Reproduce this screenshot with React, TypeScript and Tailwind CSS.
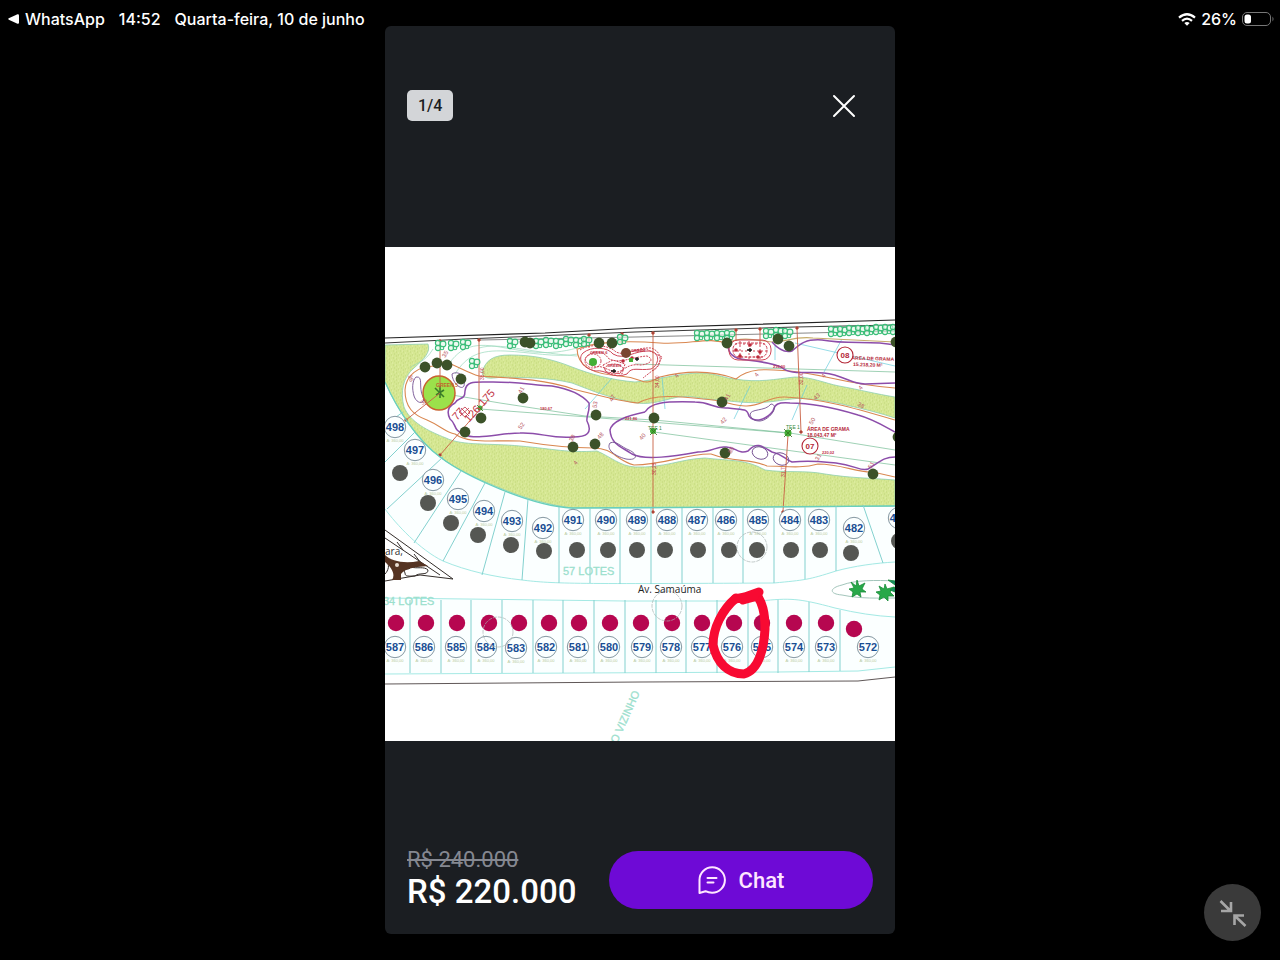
import React from "react";

type Lot = [label: string, x: number, y: number];
type Point = [x: number, y: number];

const upperLots: Lot[] = [
  ["498", 395, 427], ["497", 415, 450], ["496", 433, 480], ["495", 458, 499],
  ["494", 484, 511], ["493", 512, 521], ["492", 543, 528], ["491", 573, 520],
  ["490", 606, 520], ["489", 637, 520], ["488", 667, 520], ["487", 697, 520],
  ["486", 726, 520], ["485", 758, 520], ["484", 790, 520], ["483", 819, 520],
  ["482", 854, 528], ["481", 899, 518],
];

const lowerLots: Lot[] = [
  ["587", 395, 647], ["586", 424, 647], ["585", 456, 647], ["584", 486, 647],
  ["583", 516, 648], ["582", 546, 647], ["581", 578, 647], ["580", 609, 647],
  ["579", 642, 647], ["578", 671, 647], ["577", 702, 647], ["576", 732, 647],
  ["575", 762, 647], ["574", 794, 647], ["573", 826, 647], ["572", 868, 647],
];

const grayDots: Point[] = [
  [400, 473], [428, 503], [451, 523], [478, 535], [511, 545], [544, 551],
  [577, 550], [608, 550], [637, 550], [665, 550], [698, 550], [729, 550],
  [757, 550], [791, 550], [820, 550], [851, 553], [899, 541],
];

const crimsonDots: Point[] = [
  [396, 623], [426, 623], [457, 623], [489, 623], [519, 623], [549, 623],
  [579, 623], [610, 623], [641, 623], [672, 623], [702, 623], [734, 623],
  [762, 623], [794, 623], [826, 623], [854, 629],
];

const upperDividers = [
  "M415 432 385 462", "M443 457 387 509", "M461 471 414 543", "M485 483 443 561",
  "M505 492 482 575", "M528 499 522 580", "M559 507V583", "M590 508V583",
  "M620 508V584", "M651 508V584", "M682 508V584", "M713 508V583", "M743 508V583",
  "M774 508V583", "M805 507V579", "M836 506V571", "M863 505 883 563", "M403 412 385 425",
];

const lowerDividers = [410, 441, 471, 502, 533, 563, 594, 625, 656, 686, 717, 748, 778];

const oaks: Point[] = [
  [425, 367], [437, 363], [447, 365], [461, 379], [523, 398], [481, 418],
  [465, 432], [596, 415], [573, 447], [595, 444], [525, 342], [530, 343],
  [599, 343], [612, 343], [727, 343], [778, 339], [789, 346], [722, 402],
  [654, 418], [725, 453], [896, 342], [873, 474], [898, 437],
];

const shrubs: Point[] = [
  [440, 345], [453, 345], [465, 344], [474, 363], [512, 343], [538, 343],
  [548, 342], [558, 343], [568, 341], [578, 342], [586, 341], [622, 339],
  [699, 335], [709, 335], [719, 335], [729, 335], [768, 333], [778, 332],
  [787, 333], [833, 331], [842, 331], [851, 330], [860, 330], [869, 330],
  [878, 329], [887, 329], [895, 329],
];

const tinyMarks: [string, number, number, number][] = [
  ["36", 409, 379, 70], ["35", 425, 403, -40], ["35", 447, 355, -60], ["41", 523, 391, -60],
  ["52", 523, 427, -55], ["47", 614, 399, -60], ["53", 597, 405, -80], ["38", 574, 439, -60],
  ["48", 602, 437, -50], ["40", 644, 438, -50], ["42", 725, 422, -50], ["41", 729, 398, -60],
  ["43", 818, 398, -40], ["38", 860, 407, 30], ["31", 820, 458, -60], ["50", 814, 422, -60],
  ["85", 733, 451, -60], ["51", 873, 466, -60], ["4", 678, 377, -50], ["4", 758, 376, -50],
  ["4", 825, 377, -50], ["4", 862, 389, -50], ["4", 577, 464, -50],
];

function Shrub({ x, y }: { x: number; y: number }) {
  return (
    <g>
      <circle cx={x - 2} cy={y - 2} r={2.6} />
      <circle cx={x + 3} cy={y - 1} r={2.9} />
      <circle cx={x - 2} cy={y + 3} r={2.6} />
      <circle cx={x + 2} cy={y + 3} r={1.8} />
    </g>
  );
}

function LotTag({ lot: [label, x, y] }: { lot: Lot }) {
  return (
    <g>
      <circle cx={x} cy={y} r={10.7} fill="#fbffff" stroke="#647b88" strokeWidth={0.8} />
      <text x={x} y={y + 4} textAnchor="middle" fontSize={11} fontWeight={700} fill="#1a4e93">
        {label}
      </text>
      {x < 890 && (
        <text x={x} y={y + 15} textAnchor="middle" fontSize={4} fill="#b9cba0">
          A: 360,00
        </text>
      )}
    </g>
  );
}

function SitePlan() {
  return (
    <svg
      viewBox="385 247 510 494"
      className="block w-full bg-white font-['Liberation_Sans',sans-serif]"
      role="img"
      aria-label="Planta do loteamento"
    >
      <defs>
        <pattern id="grass" width="7" height="7" patternUnits="userSpaceOnUse">
          <rect width="7" height="7" fill="#d5e792" />
          <path d="M1 1h1M4 2h1M2 4h1M6 5h1M4 6h1" stroke="#c3d77c" strokeWidth="1" />
          <path d="M3 1h1M6 3h1M0 6h1" stroke="#e3efaa" strokeWidth="1" />
        </pattern>
      </defs>

      {/* pale wash under the lots */}
      <path d="M385 385 405 417 440 457 505 490 572 508H895V563L836 571 805 579 774 583H559L522 580 482 575 443 561 414 543 385 509Z" fill="#fbffff" />
      <path d="M385 598 625 601H802L835 608 895 617V672L385 674Z" fill="#fbffff" />

      {/* grass */}
      <g fill="url(#grass)" stroke="#8ecfb0" strokeWidth="0.8">
        <path d="M385 345 428 344C431 352 424 359 414 368C403 377 400 392 404 407C410 422 428 431 446 438C462 446 490 443 520 446C555 449 567 453 597 451C611 457 620 466 635 467C665 468 680 459 705 458C730 461 746 459 765 470C785 473 805 470 825 474C850 478 870 478 895 480V506L800 507 635 508H572C545 504 528 499 505 490C477 479 456 469 440 457C417 440 397 409 385 382Z" />
        <path d="M482 372C486 360 493 355 510 355C534 355 552 359 572 367C590 374 611 380 635 382C658 380 678 373 702 373C718 374 724 378 735 379C759 383 775 379 795 377C812 377 824 383 839 386C861 390 876 394 895 397V418C880 413 864 409 850 406C831 401 818 400 802 398C788 399 779 401 768 402C747 404 733 401 718 400C701 399 691 395 678 397C660 401 649 406 631 402C606 397 588 389 572 383C547 377 525 378 502 377C489 379 483 379 482 372Z" />
      </g>

      {/* site boundary */}
      <g fill="none" stroke="#222" strokeWidth="0.9">
        <path d="M385 338 545 333 635 328 895 320" strokeWidth="1.2" />
        <path d="M385 343 465 339 635 332 795 327 895 325" />
        <path d="M480 340 635 337 895 331" stroke="#555" strokeWidth="0.7" />
        <path d="M385 684 640 682 858 681 895 677" stroke="#4d4444" />
      </g>

      {/* cart paths */}
      <g fill="none" stroke="#98d8ba" strokeWidth="0.7">
        <path d="M445 370C458 348 471 342 500 347S548 356 577 348" />
        <path d="M455 374C467 355 480 350 505 351S556 358 578 354" />
        <path d="M479 348C500 342 525 352 577 356M433 349C425 363 415 363 410 368" />
        <path d="M440 393 500 403 585 416 654 420 790 433 895 450" stroke="#76bd95" />
        <path d="M480 409 588 417 788 433M654 432 895 465M635 364 895 372" stroke="#76bd95" />
        <path d="M612 378 585 409M750 386 734 419M807 385 792 420M842 339 824 372M775 345V360" stroke="#67cddd" />
        <path d="M662 377 665 409M795 343 895 366" stroke="#67cddd" />
      </g>

      {/* orange contours */}
      <g fill="none" stroke="#d98750" strokeWidth="1.1">
        <path d="M435 366C418 366 406 375 405 390C405 407 413 415 427 420C441 426 445 432 455 434C469 444 489 440 520 441C550 446 571 448 594 448C613 448 617 461 634 465C665 465 688 453 711 454C735 463 749 458 767 466C785 466 800 469 818 464C842 464 857 473 873 472L895 477" />
        <path d="M437 362C452 361 462 371 479 376C510 378 545 379 573 389C601 396 622 402 638 403C654 394 680 396 703 399C724 400 735 407 747 406C763 405 771 396 785 397C824 399 854 408 895 420" />
        <path d="M578 349C590 343 620 340 660 343C691 345 708 336 729 344M577 348C577 367 593 374 620 376S640 388 660 377C688 370 712 370 736 379C751 366 773 370 790 371C824 374 844 384 895 388" />
        <path d="M727 343C744 335 763 342 774 342S795 336 813 338L895 342" stroke="#c6ac6a" />
      </g>

      {/* fairways and bunkers */}
      <g fill="none" stroke="#8c4daa" strokeWidth="1.5">
        <path d="M465 391C466 381 475 382 487 382C510 381 533 385 552 386C570 389 583 396 589 403C590 412 586 416 587 421C593 433 587 437 573 437C550 439 541 432 520 433C501 433 477 440 465 435C452 430 457 424 450 419C446 411 449 406 455 403C459 396 465 401 465 391Z" />
        <path d="M645 412C626 416 612 421 610 430C611 444 620 446 632 454C645 461 675 456 698 452C712 452 717 446 725 447C735 446 738 455 748 451C756 442 761 445 772 452C783 454 784 459 792 462C812 460 824 462 836 463C855 465 861 472 868 469C881 461 884 457 895 457" />
        <path d="M645 412C650 403 663 401 695 402C711 402 713 409 728 408C744 410 747 408 749 416C755 424 767 419 773 411C775 404 778 402 790 403C817 403 845 411 858 415C873 419 884 426 895 432" />
        <path d="M728 342C727 354 734 359 747 360C763 362 772 363 781 367C792 376 805 371 824 373C844 375 850 384 865 384L895 383M772 342C779 350 785 353 792 351C801 343 806 339 822 340C849 345 870 340 895 345" />
      </g>
      <g fill="none" stroke="#735091" strokeWidth="0.9">
        <path d="M416 377C424 376 418 387 423 397C426 404 417 405 414 396C412 389 412 381 416 377Z" />
        <path d="M452 374C458 370 466 376 464 386C461 391 452 382 452 374Z" />
        <path d="M610 443C616 440 621 447 629 450C638 454 638 461 626 459C614 456 606 449 610 443Z" />
        <ellipse cx="760" cy="453" rx="8" ry="6" transform="rotate(20 760 453)" />
        <ellipse cx="781" cy="459" rx="8" ry="6" transform="rotate(20 781 459)" />
        <path d="M750 415C750 408 765 412 771 404C780 405 770 420 760 421C754 421 752 419 750 415Z" />
      </g>

      {/* ornate greens */}
      <g fill="none" stroke="#cf4758" strokeWidth="1">
        <path d="M583 353C591 346 608 347 613 354C625 361 634 350 650 351C661 353 659 365 651 369C638 371 632 366 627 374C612 380 606 369 596 371C583 369 577 359 583 353Z" />
        <path d="M587 356C594 350 604 351 608 358C617 365 632 357 647 356C656 360 648 365 640 365C627 363 623 372 617 372C605 370 603 365 595 367C586 364 583 360 587 356Z" strokeDasharray="2 1" />
        <path d="M580 350C590 343 609 345 616 352C628 357 634 347 651 348C664 352 662 367 652 371" strokeDasharray="2 1" />
        <ellipse cx="593" cy="361" rx="8" ry="7" strokeDasharray="2 1" />
        <ellipse cx="614" cy="369" rx="9" ry="5" strokeDasharray="2 1" />
        <path d="M603 365 613 360 625 364 622 374 606 372ZM629 352 646 349 662 357 657 367 643 378" strokeDasharray="2 1" />
        <rect x="729" y="340" width="42" height="20" rx="9" />
        <rect x="733" y="343" width="34" height="14" rx="6" strokeDasharray="3 1" />
        <path d="M735 344H766M733 351H768M737 357H765M740 341V359M749 341V360M760 341V359" strokeDasharray="2 2" />
      </g>
      <g fill="#bb283a">
        {[[736, 350], [740, 356], [750, 345], [760, 352], [758, 357], [623, 361], [632, 358]].map(([x, y]) => (
          <circle key={`${x}-${y}`} cx={x} cy={y} r="1.8" />
        ))}
      </g>
      <path d="M611 371h5m-2-2v4M747 350h5m-2-2v4M635 359h4m-2-2v4" stroke="#111" strokeWidth="1.3" />
      <g fontSize="4" fontWeight="700" fill="#bf3147">
        <text x="590" y="354">GREEN 6</text>
        <text x="607" y="367">GREEN</text>
        <text x="631" y="352">GREEN</text>
        <text x="773" y="368">210,00</text>
        <text x="625" y="420">221,86</text>
        <text x="540" y="410">180,67</text>
        <text x="822" y="454">220,02</text>
      </g>

      {/* tee circle */}
      <ellipse cx="439" cy="393" rx="16" ry="17" fill="#9be14b" stroke="#c8612f" strokeWidth="1.5" />
      <path d="M435 388 444 397M436 395 444 390M440 386V398" stroke="#397b28" strokeWidth="1.6" />
      <text x="436" y="387" fontSize="5" fontWeight="700" fill="#c1652c">GREEN 5</text>

      {/* survey lines */}
      <g stroke="#c86043" strokeWidth="0.9" fill="#8a2530">
        <path d="M440 341V388M479 340V407M653 333V511M797 328 801 432M788 435 783 511M406 420 440 393M440 455 488 400M736 329V341M760 329V341M622 335V345M589 336V348" />
        {[[440, 341], [479, 340], [653, 333], [653, 512], [797, 328], [801, 432], [783, 512], [406, 420], [440, 455], [736, 330], [760, 329], [589, 335], [622, 334]].map(([x, y]) => (
          <circle key={`${x}-${y}`} cx={x} cy={y} r="1.3" />
        ))}
      </g>

      <g fill="#dff7e6" fillOpacity="0.6" stroke="#39bd78" strokeWidth="1.1">
        {shrubs.map(([x, y]) => <Shrub key={`${x}-${y}`} x={x} y={y} />)}
      </g>
      <g fill="#3c5229">
        {oaks.map(([x, y]) => <circle key={`${x}-${y}`} cx={x} cy={y} r="5.4" />)}
      </g>
      <circle cx="626" cy="353" r="5" fill="#79452f" />
      <g fill="#43af36">
        <circle cx="593" cy="362" r="4" />
        <circle cx="788" cy="433" r="3.5" />
        <circle cx="653" cy="431" r="3" />
        <circle cx="480" cy="408" r="2.5" />
        <rect x="629" y="358" width="4" height="4" />
      </g>
      <path d="M784 429 792 437M792 429 784 437M650 428 657 435M657 428 650 435M477 405 483 411" stroke="#386e20" strokeWidth="0.8" />

      <g fontSize="6" fill="#b65361">
        {tinyMarks.map(([t, x, y, a], i) => (
          <text key={i} x={x} y={y} textAnchor="middle" transform={`rotate(${a} ${x} ${y})`}>{t}</text>
        ))}
      </g>
      <g fill="#c23445">
        <text x="457" y="421" fontSize="11" transform="rotate(-48 457 421)">77</text>
        <path d="M459 412 465 407 470 412 465 417ZM461 408 469 416M469 408 460 416" fill="none" stroke="#c23445" strokeWidth="0.8" />
        <text x="469" y="423" fontSize="11" transform="rotate(-48 469 423)">126.175</text>
        <text x="484" y="380" fontSize="5" transform="rotate(-90 484 380)">35,00</text>
        <text x="659" y="388" fontSize="5" transform="rotate(-90 659 388)">34,00</text>
        <text x="656" y="475" fontSize="5" transform="rotate(-90 656 475)">30,25</text>
        <text x="803" y="385" fontSize="5" transform="rotate(-90 803 385)">32,00</text>
        <text x="785" y="477" fontSize="5" transform="rotate(-90 785 477)">31,7</text>
      </g>
      <text x="648" y="430" fontSize="5" fill="#398a39">TEE 1</text>
      <text x="786" y="429" fontSize="5" fill="#398a39">TEE 1</text>

      {/* area labels */}
      <g fontWeight="700" fill="#b42838">
        <g fill="#fff" stroke="#b42838" strokeWidth="1.1">
          <circle cx="845" cy="355" r="8" />
          <circle cx="810" cy="446" r="8" />
        </g>
        <text x="845" y="358" fontSize="8" textAnchor="middle">08</text>
        <text x="810" y="449" fontSize="8" textAnchor="middle">07</text>
        <g fontSize="5">
          <text x="894" y="361" textAnchor="end" transform="rotate(2 894 361)">ÁREA DE GRAMA</text>
          <text x="853" y="366" transform="rotate(2 853 366)">15.218,20 M²</text>
          <text x="807" y="431">ÁREA DE GRAMA</text>
          <text x="807" y="437">18.043,47 M²</text>
        </g>
      </g>

      {/* lots and road edges */}
      <g fill="none" stroke="#a4e9e4" strokeWidth="1">
        <path d="M385 382C397 409 417 440 440 457C465 476 530 506 572 508L895 506" stroke="#68cfbd" strokeWidth="1.3" />
        <path d="M385 509C396 524 420 550 443 561C467 571 494 577 522 580C553 584 580 584 774 583C805 580 808 580 836 571C854 566 876 563 895 562" />
        <path d="M385 598 625 601H760C790 598 798 598 835 608C856 613 875 616 895 617" />
        <path d="M385 674 778 672 858 671 895 667" />
        <path d="M895 581C876 580 855 580 842 585C829 588 829 594 842 595C861 599 879 598 895 598" stroke="#a3c5bb" />
      </g>
      <g fill="none" stroke="#83d1cf" strokeWidth="1">
        {upperDividers.map((d) => <path key={d} d={d} />)}
        {lowerDividers.map((x) => <path key={x} d={`M${x} 600V673`} />)}
        <path d="M809 602V672M840 610V671" />
      </g>

      {upperLots.map((lot) => <LotTag key={lot[0]} lot={lot} />)}
      {lowerLots.map((lot) => <LotTag key={lot[0]} lot={lot} />)}
      <g fill="#555753">
        {grayDots.map(([x, y]) => <circle key={x} cx={x} cy={y} r="8" />)}
      </g>
      <g fill="#b60750">
        {crimsonDots.map(([x, y]) => <circle key={x} cx={x} cy={y} r="8.2" />)}
      </g>
      <g fill="none" stroke="#a9b3b1" strokeWidth="0.7" strokeDasharray="4 1">
        <circle cx="752" cy="547" r="15" />
        <circle cx="667" cy="606" r="15" />
        <circle cx="498" cy="632" r="15" />
      </g>

      <g fontSize="11" fill="#9be0cd" stroke="#9be0cd" strokeWidth="0.3">
        <text x="563" y="575">57 LOTES</text>
        <text x="383" y="605">34 LOTES</text>
        <text x="617" y="744" transform="rotate(-66 617 744)">O VIZINHO</text>
      </g>
      <text x="638" y="593" fontSize="10" fontWeight="500" fill="#222" className="font-['Open_Sans',sans-serif]">Av. Samaúma</text>

      {/* roundabout garden */}
      <g fill="none" stroke="#342d2a" strokeWidth="1">
        <path d="M385 530 453 579 420 575 385 581M385 538 440 575M397 542 403 550M414 554 421 563" />
        <path d="M405 573C402 567 409 571 411 567C417 569 424 566 428 570C428 576 419 572 415 576C409 576 405 577 405 573ZM385 560C391 564 388 571 385 574" />
      </g>
      <path d="M385 555C391 561 404 564 419 561L428 566C412 567 405 569 401 574V580H392C396 574 391 567 385 562Z" fill="#553322" />
      <circle cx="397" cy="565" r="2" fill="#e9ddd2" />
      <text x="385" y="555" fontSize="10" fill="#333" className="font-['Open_Sans',sans-serif]">ara,</text>

      {/* palms */}
      <g fill="#28a849" stroke="#188d37" strokeWidth="0.8">
        <path d="M857 580 859 586 865 583 862 589 866 592 860 592 861 597 857 594 852 597 853 592 849 589 854 588 851 582 856 586Z" />
        <path d="M885 584 887 589 894 587 890 592 894 596 888 596 888 601 884 597 879 600 880 595 876 592 881 591 879 586 884 589Z" />
        <path d="M888 580 895 585V581ZM890 590 895 592V587Z" fill="#168a68" />
      </g>

      {/* hand-drawn marker */}
      <g fill="none" stroke="#f80a32" strokeLinecap="round" strokeLinejoin="round">
        <path d="M736 598C722 610 713 628 713 645C717 663 728 674 744 674C759 670 764 648 765 629C765 611 762 603 757 595" strokeWidth="9" />
        <path d="M735 599 745 597 759 592M743 600 754 597" strokeWidth="9" />
      </g>
    </svg>
  );
}

export default function App() {
  return (
    <div className="relative flex min-h-screen flex-col bg-black font-[Roboto,sans-serif] text-white">
      <header className="flex justify-between pt-3 pr-[6px] pl-2 font-[Inter,sans-serif] text-base leading-[14px] font-medium">
        <div className="flex items-center">
          <a href="#whatsapp" className="flex items-center gap-[6px]">
            <svg viewBox="0 0 11 10" className="h-[10px] w-[11px]" fill="currentColor" aria-hidden="true">
              <path d="M0.8 4.3 9.5 0.2Q11 0 11 1.2V8.8Q11 10 9.5 9.8L0.8 5.7Q-.3 5 .8 4.3Z" />
            </svg>
            WhatsApp
          </a>
          <time className="ml-[14px]">14:52</time>
          <span className="ml-[14px]">Quarta-feira, 10 de junho</span>
        </div>
        <div className="flex items-center gap-[5px]">
          <svg viewBox="0 0 18 13" className="h-[13px] w-[18px]" fill="none" stroke="currentColor" strokeWidth="2.2" aria-hidden="true">
            <path d="M1 4.7Q9-2.2 17 4.7M4 7.9Q9 3.5 14 7.9" />
            <path d="M6.3 10Q9 7.9 11.7 10L9 12.8Z" fill="currentColor" stroke="none" />
          </svg>
          <span>26%</span>
          <svg viewBox="0 0 32 14" className="h-[14px] w-[32px]" aria-label="Bateria" role="img">
            <rect x=".5" y=".5" width="28" height="13" rx="4.5" fill="none" stroke="#777" />
            <rect x="2.500" y="2.500" width="6.500" height="9" rx="2.500" fill="#fff" />
            <path d="M30.500 4.500Q32.500 7 30.500 9.500Z" fill="#777" />
          </svg>
        </div>
      </header>

      <main className="mx-auto mb-[26px] flex w-full max-w-[510px] flex-1 flex-col rounded-md bg-[#1b1e22]">
        <div className="flex items-center justify-between pt-16 pr-[39px] pl-[22px]">
          <span className="rounded-[5px] bg-[#d3d5d8] px-[11px] py-[5px] text-base leading-[21px] font-medium text-[#1b1e22]">
            1/4
          </span>
          <button type="button" aria-label="Fechar" className="cursor-pointer">
            <svg viewBox="0 0 24 24" className="size-6" fill="none" stroke="currentColor" strokeWidth="2" strokeLinecap="round">
              <path d="M2 2 22 22M22 2 2 22" />
            </svg>
          </button>
        </div>

        <figure className="mt-[126px]">
          <SitePlan />
        </figure>

        <footer className="mt-auto flex items-center justify-between pr-[22px] pb-[22px] pl-[22px]">
          <div>
            <del className="block text-[22px] leading-6 text-[#858891]">R$ 240.000</del>
            <strong className="block text-[33px] leading-10 font-medium">R$ 220.000</strong>
          </div>
          <button
            type="button"
            className="flex h-[58px] w-[264px] cursor-pointer items-center justify-center gap-[13px] rounded-full bg-[#6e0ad6] text-[22px] font-medium text-[#ffe6ff]"
          >
            <svg viewBox="0 0 28 28" className="size-7" fill="none" stroke="currentColor" strokeWidth="2" strokeLinecap="round" strokeLinejoin="round" aria-hidden="true">
              <path d="M1.500 27V14A12.700 12.700 0 1 1 14 26.700Q10.500 26.700 7.500 25.200ZM9.500 12H18.500M9.500 16.500H15.500" />
            </svg>
            Chat
          </button>
        </footer>
      </main>

      <button
        type="button"
        aria-label="Reduzir"
        className="absolute right-[19px] bottom-[19px] flex size-[57px] cursor-pointer items-center justify-center rounded-full bg-[#3a3a3a]"
      >
        <svg viewBox="0 0 28 28" className="size-7" fill="none" stroke="#a6a6a6" strokeWidth="2.6" aria-hidden="true">
          <path d="M1.500 2 11 11.500M2 12H12V3M26.500 27 16 17M15.500 26V16.500H25" />
        </svg>
      </button>
    </div>
  );
}
